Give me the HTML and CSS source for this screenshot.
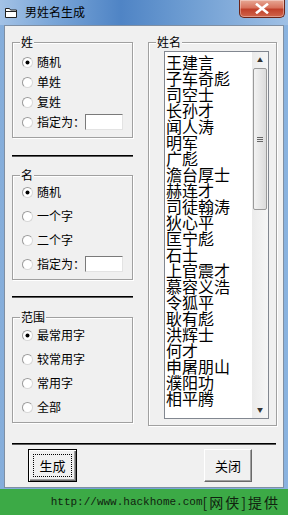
FILE: index.html
```html
<!DOCTYPE html>
<html>
<head>
    <title>男姓名生成</title>
    <link rel="stylesheet" href="styles.css">
</head>
<body>
    <div class="window">
        <div class="titlebar">
            <svg class="title-icon" width="12" height="11" viewBox="0 0 12 11">
                <path d="M0.5 1.5h4l1 1.5h6v7.5h-11z" fill="#fff" stroke="#222" stroke-width="1"/>
                <path d="M0.5 4.5h11" stroke="#222" stroke-width="1"/>
            </svg>
            <span class="title-text">男姓名生成</span>
            <div class="close-btn">
                <svg width="14" height="11" viewBox="0 0 14 11">
                    <path d="M2 1.5l10 8M12 1.5l-10 8" stroke="#fff" stroke-width="2.6" stroke-linecap="square"/>
                </svg>
            </div>
        </div>
        <div class="client">
            <div class="main">
                <div class="left-col">
                    <div class="group group-xing">
                        <span class="legend">姓</span>
                        <div class="opt"><span class="radio checked"></span>随机</div>
                        <div class="opt"><span class="radio"></span>单姓</div>
                        <div class="opt"><span class="radio"></span>复姓</div>
                        <div class="opt"><span class="radio"></span>指定为：<span class="textbox"></span></div>
                    </div>
                    <div class="rule rule-1"></div>
                    <div class="group group-ming">
                        <span class="legend">名</span>
                        <div class="opt"><span class="radio checked"></span>随机</div>
                        <div class="opt"><span class="radio"></span>一个字</div>
                        <div class="opt"><span class="radio"></span>二个字</div>
                        <div class="opt"><span class="radio"></span>指定为：<span class="textbox"></span></div>
                    </div>
                    <div class="rule rule-2"></div>
                    <div class="group group-range">
                        <span class="legend">范围</span>
                        <div class="opt"><span class="radio checked"></span>最常用字</div>
                        <div class="opt"><span class="radio"></span>较常用字</div>
                        <div class="opt"><span class="radio"></span>常用字</div>
                        <div class="opt"><span class="radio"></span>全部</div>
                    </div>
                </div>
                <div class="group group-names">
                    <span class="legend">姓名</span>
                    <div class="listbox">
                        <div class="names">
                            <div>王建言</div>
                            <div>子车奇彪</div>
                            <div>司空士</div>
                            <div>长孙才</div>
                            <div>闻人涛</div>
                            <div>明军</div>
                            <div>广彪</div>
                            <div>澹台厚士</div>
                            <div>赫连才</div>
                            <div>司徒翰涛</div>
                            <div>狄心平</div>
                            <div>匡宁彪</div>
                            <div>石士</div>
                            <div>上官震才</div>
                            <div>慕容义浩</div>
                            <div>令狐平</div>
                            <div>耿有彪</div>
                            <div>洪辉士</div>
                            <div>何才</div>
                            <div>申屠朋山</div>
                            <div>濮阳功</div>
                            <div>相平腾</div>
                        </div>
                        <div class="scrollbar">
                            <div class="arrow">▲</div>
                            <div class="track">
                                <div class="thumb"><span class="grip"></span></div>
                            </div>
                            <div class="arrow">▼</div>
                        </div>
                    </div>
                </div>
            </div>
            <div class="rule rule-bottom"></div>
            <div class="buttons">
                <div class="btn btn-default"><span class="focus">生成</span></div>
                <div class="btn btn-close">关闭</div>
            </div>
        </div>
    </div>
    <div class="footer">
        <span class="url">http://www.hackhome.com</span><span class="cn">[网侠]提供</span>
    </div>
</body>
</html>
```

FILE: styles.css
```css
body {
    margin: 0;
    width: 288px;
    height: 515px;
    overflow: hidden;
    font-family: "Noto Sans CJK SC", "Liberation Sans", sans-serif;
    font-size: 12px;
    color: #000;
    background: #fff;
}

.window {
    height: 489px;
    box-sizing: border-box;
    padding: 0 4px 1px 4px;
    background: linear-gradient(to right, #86aedb 0%, #6f9fd4 40%, #8ab3df 100%);
}

/* barra de titulo */
.titlebar {
    height: 25px;
    display: flex;
    align-items: center;
    margin: 0 -4px;
    padding-left: 5px;
    background: linear-gradient(to right, #a3c2e6 0%, #7aa6d8 18%, #4f84c5 42%, #6e9dd2 65%, #9fc0e5 100%);
    position: relative;
}

.title-icon {
    margin-top: -1px;
}

.title-text {
    margin-left: 8px;
    font-size: 12px;
    line-height: 14px;
    color: #000;
    margin-top: -1px;
}

.close-btn {
    position: absolute;
    top: 0;
    right: 3px;
    width: 44px;
    height: 17px;
    display: flex;
    align-items: center;
    justify-content: center;
    border: 1px solid #6b2418;
    border-top: none;
    border-radius: 0 0 5px 5px;
    background: linear-gradient(to bottom, #e7a895 0%, #d8735d 45%, #c0402a 55%, #d0654c 100%);
    box-shadow: inset 0 0 0 1px rgba(255, 255, 255, 0.35);
}

/* area cliente */
.client {
    height: 463px;
    box-sizing: border-box;
    border: 1px solid #7f8fa3;
    background-color: #f0f0f0;
    padding-left: 7px;
}

.main {
    display: flex;
    gap: 15px;
}

.left-col {
    width: 121px;
    display: flex;
    flex-direction: column;
}

.group {
    position: relative;
    box-sizing: border-box;
    border: 1px solid #a0a0a0;
    box-shadow: 1px 1px 0 #fff, inset 1px 1px 0 #fff;
}

.legend {
    position: absolute;
    top: -8px;
    left: 7px;
    padding: 0 1px;
    line-height: 14px;
    background-color: #f0f0f0;
}

.group-xing {
    margin-top: 16px;
    height: 96px;
    padding: 9px 0 0 9px;
}

.group-xing .opt {
    height: 20px;
}

.group-ming {
    margin-top: 19px;
    height: 105px;
    padding: 4px 0 0 9px;
}

.group-range {
    margin-top: 20px;
    height: 106px;
    padding: 5px 0 0 9px;
}

.group-ming .opt,
.group-range .opt {
    height: 24px;
}

.opt {
    display: flex;
    align-items: center;
    line-height: 14px;
}

.radio {
    width: 11px;
    height: 11px;
    box-sizing: border-box;
    border-radius: 50%;
    border: 1px solid #9a9a9a;
    border-right-color: #d8d8d8;
    border-bottom-color: #d8d8d8;
    background: #fff;
    margin-right: 4px;
    position: relative;
}

.radio.checked::after {
    content: "";
    position: absolute;
    left: 3px;
    top: 3px;
    width: 3px;
    height: 3px;
    border-radius: 50%;
    background: #000;
    box-shadow: 0 0 0 0.5px #000;
}

.textbox {
    width: 38px;
    height: 16px;
    box-sizing: border-box;
    background: #fff;
    border: 1px solid #7a7a7a;
    border-right-color: #e3e3e3;
    border-bottom-color: #e3e3e3;
}

.rule {
    height: 1px;
    background-color: #000;
    box-shadow: 0 1px 0 #5a5a5a;
}

.rule-1 {
    margin-top: 17px;
}

.rule-2 {
    margin-top: 16px;
}

/* lista de nomes */
.group-names {
    margin-top: 16px;
    width: 129px;
    height: 384px;
    padding: 8px 0 0 15px;
}

.listbox {
    width: 105px;
    height: 368px;
    box-sizing: border-box;
    border: 1px solid #828790;
    background: #fff;
    display: flex;
}

.names {
    flex: 1;
    overflow: hidden;
    padding: 2px 0 0 1px;
    font-size: 16px;
    line-height: 16px;
}

.scrollbar {
    width: 16px;
    display: flex;
    flex-direction: column;
    background: linear-gradient(to right, #ebebeb, #f6f6f6);
}

.arrow {
    height: 16px;
    font-size: 6px;
    line-height: 16px;
    text-align: center;
    color: #333;
}

.track {
    flex: 1;
}

.thumb {
    margin: 0 1px;
    height: 142px;
    box-sizing: border-box;
    border: 1px solid #9a9a9a;
    border-radius: 2px;
    background: linear-gradient(to right, #f2f2f2, #dcdcdc);
    display: flex;
    align-items: center;
    justify-content: center;
}

.grip {
    width: 6px;
    height: 5px;
    border-top: 1px solid #666;
    border-bottom: 1px solid #666;
    box-sizing: border-box;
    position: relative;
}

.grip::after {
    content: "";
    position: absolute;
    left: 0;
    right: 0;
    top: 1px;
    height: 1px;
    background: #666;
}

.rule-bottom {
    margin-top: 17px;
    width: 264px;
}

/* botoes */
.buttons {
    display: flex;
    margin-top: 5px;
    padding-left: 16px;
}

.btn {
    height: 33px;
    box-sizing: border-box;
    display: flex;
    align-items: center;
    justify-content: center;
    font-size: 13px;
    background-color: #f0f0f0;
}

.btn-default {
    width: 49px;
    border: 1px solid #000;
    box-shadow: inset 1px 1px 0 #fff, inset -1px -1px 0 #696969, inset -2px -2px 0 #a0a0a0;
}

.btn-default .focus {
    width: 39px;
    height: 23px;
    box-sizing: border-box;
    border: 1px dotted #000;
    display: flex;
    align-items: center;
    justify-content: center;
}

.btn-close {
    width: 48px;
    margin-left: 127px;
    border: 1px solid;
    border-color: #fff #696969 #696969 #fff;
    box-shadow: inset -1px -1px 0 #a0a0a0;
}

/* rodape */
.footer {
    height: 26px;
    background-color: #3caa46;
    display: flex;
    align-items: center;
    justify-content: flex-end;
    padding-right: 8px;
    color: #10220f;
}

.footer .url {
    font-family: "Liberation Mono", monospace;
    font-size: 11px;
}

.footer .cn {
    font-size: 14px;
    line-height: 16px;
    letter-spacing: 2px;
}
```
